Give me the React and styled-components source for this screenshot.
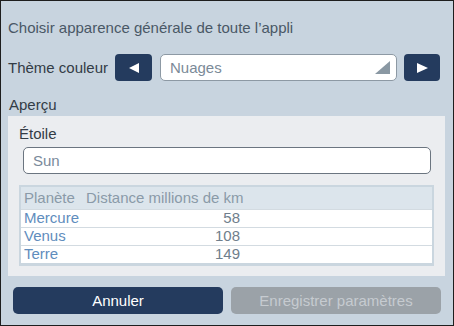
import React from 'react';
import styled, { createGlobalStyle } from 'styled-components';

const GlobalStyle = createGlobalStyle`
  html, body {
    margin: 0;
    padding: 0;
  }
  body {
    font-family: "Liberation Sans", Arial, sans-serif;
    font-size: 15px;
  }
  * {
    box-sizing: border-box;
  }
`;

const Frame = styled.div`
  width: 454px;
  height: 326px;
  border: 1px solid #1e1e1e;
  background-color: #c8d4df;
  padding: 0 8px 0 7px;
  display: flex;
  flex-direction: column;
  color: #333c46;
`;

const Title = styled.div`
  margin-top: 18px;
  line-height: 18px;
  color: #4a5866;
`;

const ThemeRow = styled.div`
  display: flex;
  align-items: center;
  height: 27px;
  margin-top: 17px;
`;

const Label = styled.div`
  line-height: 16px;
  width: ${(p) => p.width || 'auto'};
  flex-shrink: 0;
`;

const ArrowButton = styled.button`
  width: ${(p) => p.width}px;
  height: 27px;
  border: none;
  border-radius: 4px;
  background-color: #243b5e;
  display: flex;
  align-items: center;
  justify-content: center;
  padding: 0;
  margin-left: ${(p) => p.gap}px;
  flex-shrink: 0;
  cursor: pointer;
`;

const Select = styled.div`
  width: 237px;
  height: 27px;
  margin-left: 8px;
  background-color: #fff;
  border: 1px solid #8d99a4;
  border-radius: 5px;
  display: flex;
  align-items: center;
  justify-content: space-between;
  padding: 0 6px 0 9px;
  color: #7b8a98;
`;

const SectionLabel = styled.div`
  margin-top: 16px;
  line-height: 16px;
  padding-left: 1px;
`;

const Panel = styled.div`
  margin-top: 3px;
  height: 160px;
  background-color: #ebedf0;
  padding: 10px 11px 0 11px;
  display: flex;
  flex-direction: column;
`;

const TextInput = styled.div`
  height: 27px;
  margin: 5px 3px 0 4px;
  background-color: #fff;
  border: 1px solid #6b7580;
  border-radius: 5px;
  padding-left: 9px;
  display: flex;
  align-items: center;
  color: #7a8a9a;
`;

const TableBox = styled.div`
  margin-top: 11px;
  border: 2px solid #cad6df;
  border-bottom-width: 3px;
  background-color: #fff;
`;

const Table = styled.table`
  width: 100%;
  border-collapse: collapse;
  table-layout: fixed;
  font-size: 15px;
`;

const HeadCell = styled.th`
  height: 22px;
  padding: ${(p) => (p.first ? '0 0 0 3px' : '0 4px')};
  background-color: #dce5ec;
  color: #8a9aa8;
  font-weight: normal;
  text-align: left;
  white-space: nowrap;
`;

const Cell = styled.td`
  height: 18px;
  padding: ${(p) => (p.first ? '0 0 0 3px' : '0 4px')};
  border-top: 1px solid #d3dbe1;
  line-height: 16px;
  color: ${(p) => (p.first ? '#5f8dbd' : '#6f7e8c')};
  text-align: ${(p) => (p.first ? 'left' : 'right')};
`;

const Footer = styled.div`
  display: flex;
  gap: 8px;
  margin-top: 11px;
  padding: 0 4px 0 5px;
`;

const FooterButton = styled.button`
  flex: 1;
  height: 27px;
  border: none;
  border-radius: 5px;
  font-family: inherit;
  font-size: 15px;
  background-color: ${(p) => (p.disabled ? '#9ba2a8' : '#243b5e')};
  color: ${(p) => (p.disabled ? '#c6cbd0' : '#ffffff')};
  cursor: ${(p) => (p.disabled ? 'default' : 'pointer')};
`;

const planets = [
  { name: 'Mercure', distance: 58 },
  { name: 'Venus', distance: 108 },
  { name: 'Terre', distance: 149 },
];

function Triangle({ dir }) {
  const points = dir === 'left' ? '10,0 10,10 0,5' : '0,0 0,10 11,5';
  return (
    <svg width={dir === 'left' ? 10 : 11} height="10" viewBox={dir === 'left' ? '0 0 10 10' : '0 0 11 10'}>
      <polygon points={points} fill="#fff" />
    </svg>
  );
}

export default function App() {
  return (
    <>
      <GlobalStyle />
      <Frame>
        <Title>Choisir apparence générale de toute l’appli</Title>
        <ThemeRow>
          <Label width="107px">Thème couleur</Label>
          <ArrowButton width={37} gap={0}>
            <Triangle dir="left" />
          </ArrowButton>
          <Select>
            <span>Nuages</span>
            <svg width="15" height="13" viewBox="0 0 15 13">
              <polygon points="15,0 15,13 0,13" fill="#8a98a3" />
            </svg>
          </Select>
          <ArrowButton width={36} gap={7}>
            <Triangle dir="right" />
          </ArrowButton>
        </ThemeRow>
        <SectionLabel>Aperçu</SectionLabel>
        <Panel>
          <Label>Étoile</Label>
          <TextInput>Sun</TextInput>
          <TableBox>
            <Table>
              <colgroup>
                <col style={{ width: 61 }} />
                <col style={{ width: 162 }} />
                <col />
              </colgroup>
              <thead>
                <tr>
                  <HeadCell first>Planète</HeadCell>
                  <HeadCell>Distance millions de km</HeadCell>
                  <HeadCell />
                </tr>
              </thead>
              <tbody>
                {planets.map((p) => (
                  <tr key={p.name}>
                    <Cell first>{p.name}</Cell>
                    <Cell>{p.distance}</Cell>
                    <Cell />
                  </tr>
                ))}
              </tbody>
            </Table>
          </TableBox>
        </Panel>
        <Footer>
          <FooterButton>Annuler</FooterButton>
          <FooterButton disabled>Enregistrer paramètres</FooterButton>
        </Footer>
      </Frame>
    </>
  );
}
